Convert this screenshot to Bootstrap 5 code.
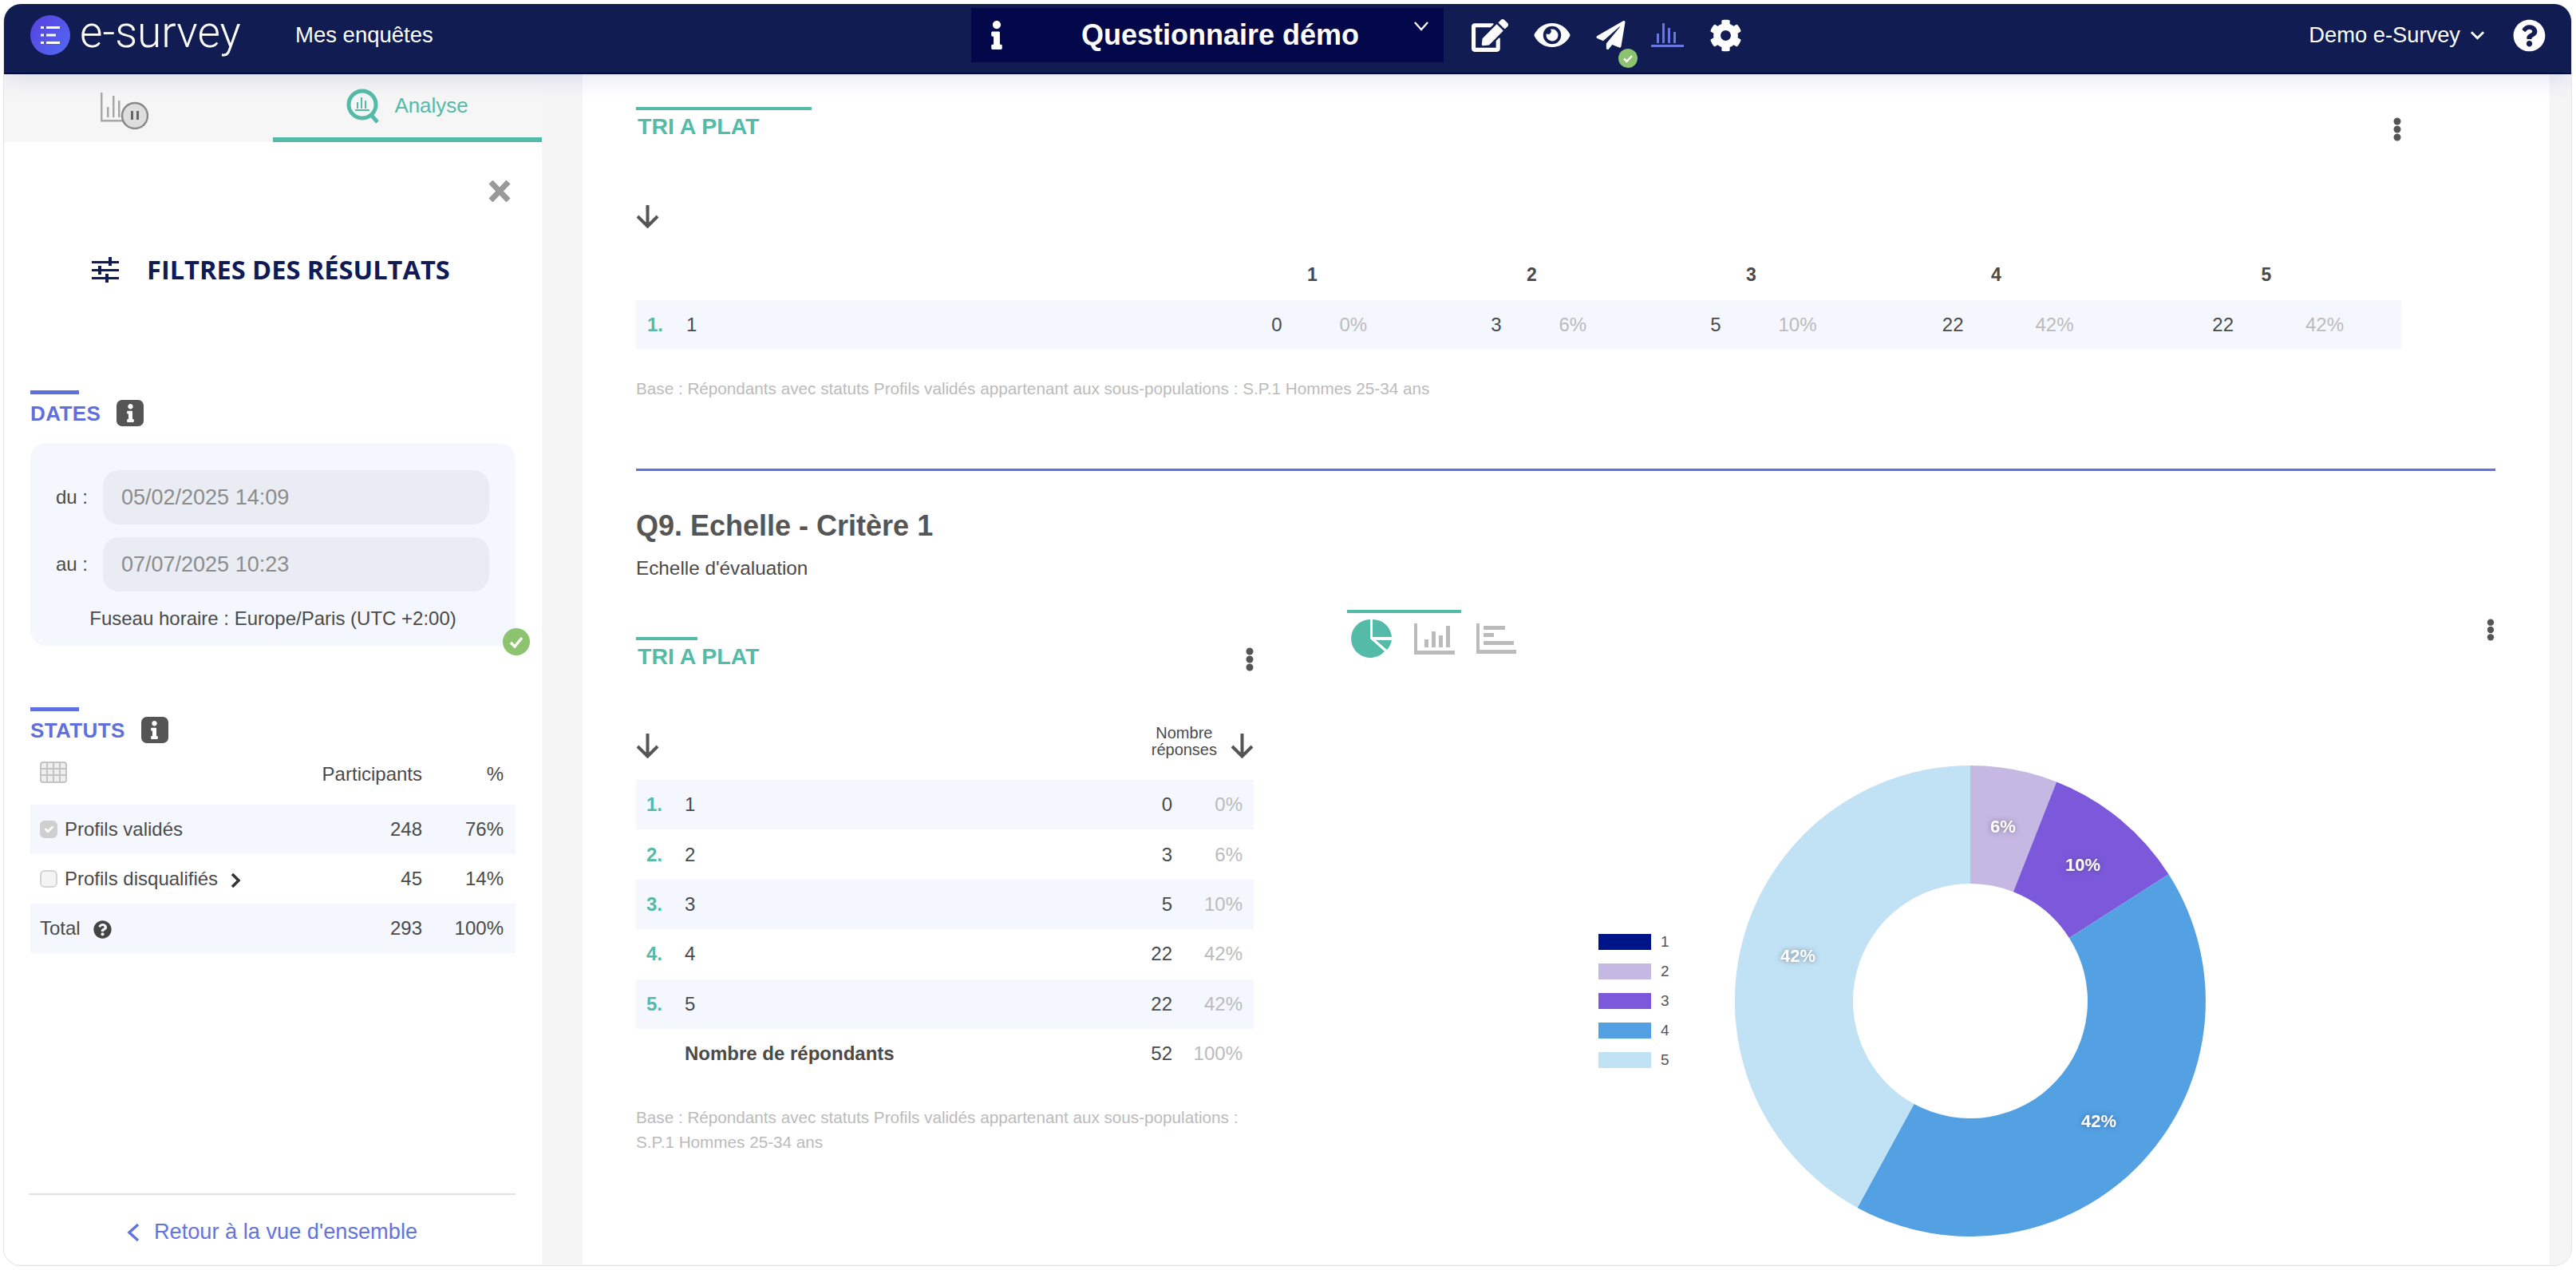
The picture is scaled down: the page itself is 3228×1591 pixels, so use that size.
<!DOCTYPE html>
<html lang="fr">
<head>
<meta charset="UTF-8">
<title>e-survey - Analyse</title>
<link href="https://cdn.jsdelivr.net/npm/bootstrap@5.3.3/dist/css/bootstrap.min.css" rel="stylesheet">
<style>
body { background: #fff; font-family: "Liberation Sans", Arial, sans-serif; font-size: 24px; color: #4a4a4a; padding: 5px 5px 5px 4px; margin: 0; height: 1591px; overflow: hidden; }
.app-shell { width: 3219px; height: 1581px; border: 1px solid #e4e4e8; border-top: 0; border-radius: 22px; overflow: hidden; background: #f5f5f6; }
/* top bar */
.top-bar { height: 88px; flex-wrap: nowrap; background: #111c52; border-bottom: 2px solid #040b3f; box-shadow: 0 8px 24px rgba(70,70,170,.13); color: #fff; padding: 0 0 8px; z-index: 5; }
.logo-dot { width: 50px; height: 50px; margin-left: 33px; }
.logo-word { font-family: Roboto, sans-serif; font-weight: 300; font-size: 55px; line-height: 1; margin-left: 12px; width: 270px; position: relative; top: -4px; white-space: nowrap; }
.top-link { font-size: 27.5px; color: #fff; text-decoration: none; width: 847px; }
.quest-box { width: 592px; height: 68px; background: #02084a; padding: 0 19px 0 25px; }
.quest-name { font-size: 36px; font-weight: 700; flex: 1; text-align: center; padding-left: 30px; white-space: nowrap; }
.quest-chev { margin-top: -22px; }
.top-icons { margin-left: 35px; gap: 32px; }
.top-user { font-size: 27.3px; margin-left: auto; }
.user-chev { margin: 0 35px 0 12px; }
.user-help { margin-right: 32px; }
.mini-check { width: 24px; height: 24px; position: absolute; left: 28px; top: 35px; }
/* sidebar */
.side-wrap { height: 1491px; }
.side-col { width: 674px; background: #fff; }
.side-tabs { height: 85px; background: #f6f6f6; }
.tab-cell { width: 50%; padding-bottom: 6px; }
.tab-off { padding: 6px 36px 0 0; }
.tab-on { border-bottom: 6px solid #54bba9; padding-bottom: 0; color: #54bba9; font-size: 25.9px; gap: 18px; }
.side-body { padding: 48px 33px 0 33px; flex: 1; min-width: 0; }
.close-line { padding-right: 6px; }
.filter-title { margin-top: 65px; margin-left: 77px; height: 40px; gap: 35px; }
.filter-title span { font-family: "Open Sans", sans-serif; font-weight: 700; font-size: 32.6px; color: #101a55; white-space: nowrap; }
.blue-rule { width: 61px; height: 5px; background: #5f6fdd; }
.blue-title { font-size: 26px; font-weight: 700; color: #5f6fdd; line-height: 30px; margin-top: 7px; gap: 20px; letter-spacing: .4px; }
.info-tag { width: 34px; height: 33px; background: #555; border-radius: 7px; }
.dates-head { margin-top: 131px; }
.date-panel { margin-top: 21px; background: #f5f7fe; border-radius: 20px; padding: 34px 33px 19px 32px; position: relative; }
.date-row { margin-bottom: 16px; }
.date-row label { flex: 0 0 59px; font-size: 24px; }
.date-row .form-control { height: 68px; background: #e9ecf3; border: 0; border-radius: 20px; color: #8c8c8c; font-size: 27px; padding-left: 23px; opacity: 1; }
.tz-line { text-align: center; line-height: 30px; margin-top: 19px; font-size: 24px; white-space: nowrap; margin-left: -32px; margin-right: -33px; }
.ok-badge { position: absolute; right: -18px; bottom: -12px; width: 34px; height: 34px; }
.status-head { margin-top: 77px; }
.stat-table.table { margin: 19px 0 0; font-size: 24px; --bs-table-color: #4a4a4a; table-layout: fixed; }
.stat-table.table > :not(caption) > * > * { padding: 0; border: 0; vertical-align: middle; height: 62px; white-space: nowrap; }
.stat-table.table > thead > tr > * { height: 40px; font-weight: 400; }
.stat-table.table > tbody > tr > .spacer-cell { height: 18px; }
.tint { --bs-table-bg: #f4f7fe; }
.stat-table.table .stat-first { padding-left: 12px; }
.grid-glyph { margin-top: -8px; }
.stat-num { width: 130px; text-align: right; }
.stat-table.table .stat-pct { width: 117px; text-align: right; padding-right: 15px; }
.stat-table .form-check-input { width: 22px; height: 22px; margin: 0 9px 0 0; background-color: #f4f4f4; border: 2px solid #d4d4d4; opacity: 1; vertical-align: -3px; }
.stat-table .form-check-input:checked { background-color: #cfcfcf; border-color: #cfcfcf; }
.side-foot { border-top: 2px solid #e2e2e2; margin: 0 33px 0 31px; height: 89px; padding-top: 6px; color: #6474dc; font-size: 27.2px; gap: 18px; }
.side-foot a { color: #6474dc; text-decoration: none; }
/* main */
.gutter-bar { width: 51px; }
.main-col { width: 2465px; background: #fff; padding: 41px 68px 0 67px; overflow: hidden; }
.track-bar { flex: 1; background: #f5f5f6; }
.teal-rule { height: 4px; background: #54bba9; }
.teal-title { font-size: 28.5px; font-weight: 700; color: #54bba9; line-height: 32px; margin: 4px 0 0 2px; }
.wide-head { width: 2212px; }
.rule-long { width: 220px; }
.rule-short { width: 77px; }
.kebab { width: 10px; height: 30px; margin-top: 13px; margin-bottom: -10px; }
.arrow-first { margin-top: 83px; }
.wide-grid { width: 2212px; display: grid; grid-template-columns: 710px 275px 275px 275px 339px 338px; }
.wide-labels { margin-top: 43px; line-height: 30px; font-size: 23px; font-weight: 700; text-align: center; }
.wide-row { margin-top: 17px; height: 62px; background: #f4f7fe; align-items: center; }
.item-no { color: #54bba9; font-weight: 700; }
.item-cell { padding-left: 14px; }
.item-cell .item-no { display: inline-block; width: 49px; }
.pair-cell { display: flex; }
.pair-val { flex: 0 0 calc(50% - 38px); text-align: right; }
.pair-pct { margin-left: 72px; color: #bbb; }
.pair-big .pair-val { flex-basis: calc(50% - 41px); }
.pair-big .pair-pct { margin-left: 90px; }
.base-note { color: #bbb; font-size: 20.7px; line-height: 30px; }
.base-wide { margin-top: 34px; }
.blue-line { height: 3px; background: #5f72dd; margin-top: 85px; }
.q-title { font-size: 36px; font-weight: 700; color: #555; line-height: 40px; margin: 49px 0 0; }
.q-sub { font-size: 24.3px; line-height: 30px; margin-top: 18px; }
.q-split { margin-top: 37px; }
.q-left { width: 774px; padding-top: 34px; }
.q-right { width: 1439px; margin-left: 117px; }
.left-head { height: 41px; margin-top: 71px; }
.nb-label { font-size: 20px; line-height: 21px; text-align: center; margin-right: 17px; }
.flat-table.table { margin: 27px 0 0; font-size: 24px; --bs-table-color: #4a4a4a; table-layout: fixed; }
.flat-table.table > :not(caption) > * > * { padding: 0; border: 0; height: 62.4px; vertical-align: middle; }
.flat-table.table .flat-no { width: 61px; padding-left: 13px; color: #54bba9; }
.flat-val { width: 80px; text-align: right; }
.flat-table.table .flat-pct { width: 102px; text-align: right; padding-right: 14px; color: #bbb; }
.left-note { line-height: 31px; margin-top: 33px; white-space: nowrap; }
.chart-rule { width: 143px; height: 4px; background: #54bba9; }
.chart-icons { margin-top: 8px; padding-left: 5px; gap: 27px; }
.chart-kebab { margin: 11px 1px 0 0; height: 28px; }
.chart-area { margin-top: 135px; padding-left: 315px; }
.legend-box { width: 171px; gap: 17px; font-size: 19px; color: #555; }
.legend-item { height: 20px; gap: 12px; }
.legend-swatch { width: 66px; height: 20px; }
.sw-one { background: #001489; }
.sw-two { background: #c5b8e2; }
.sw-three { background: #7c58db; }
.sw-four { background: #53a0e3; }
.sw-five { background: #c1e1f4; }
.donut-text { font-size: 22px; font-weight: 700; fill: #fff; text-anchor: middle; filter: drop-shadow(0 0 3px rgba(60,60,90,.55)); font-family: "Liberation Sans", Arial, sans-serif; }
</style>
</head>
<body>
<div class="app-shell d-flex flex-column">
  <nav class="navbar top-bar justify-content-start align-items-center position-relative">
    <svg class="logo-dot" viewBox="0 0 50 50">
      <defs><linearGradient id="logoGrad" x1="0" y1="0" x2="1" y2="1"><stop offset="0" stop-color="#5a3fe0"/><stop offset="1" stop-color="#4f6bf2"/></linearGradient></defs>
      <circle cx="25" cy="25" r="25" fill="url(#logoGrad)"/><g fill="#fff"><rect x="13" y="14" width="4" height="3"/><rect x="20" y="14" width="17" height="3"/><rect x="13" y="23.500" width="4" height="3"/><rect x="20" y="23.500" width="12" height="3"/><rect x="13" y="33" width="4" height="3"/><rect x="20" y="33" width="17" height="3"/></g></svg>
    <span class="logo-word">e-survey</span>
    <a class="top-link" href="#">Mes enquêtes</a>
    <div class="quest-box d-flex align-items-center">
      <svg width="14" height="36" viewBox="0 0 192 512" fill="#fff"><path d="M20 424.229h20V279.771H20c-11.046 0-20-8.954-20-20V212c0-11.046 8.954-20 20-20h112c11.046 0 20 8.954 20 20v212.229h20c11.046 0 20 8.954 20 20V492c0 11.046-8.954 20-20 20H20c-11.046 0-20-8.954-20-20v-47.771c0-11.046 8.954-20 20-20zM96 0C56.235 0 24 32.235 24 72s32.235 72 72 72 72-32.235 72-72S135.764 0 96 0z"/></svg>
      <span class="quest-name">Questionnaire démo</span>
      <svg class="quest-chev" width="18" height="12" viewBox="0 0 20 13" fill="none" stroke="#fff" stroke-width="2.500"><path d="M1 1l9 10 9-10"/></svg>
    </div>
    <div class="top-icons d-flex align-items-center">
      <svg width="46" height="41" viewBox="0 0 576 512" fill="#fff"><path d="M402.6 83.2l90.2 90.2c3.8 3.8 3.8 10 0 13.8L274.4 405.6l-92.8 10.3c-12.4 1.4-22.9-9.1-21.5-21.5l10.3-92.8L388.8 83.2c3.8-3.8 10-3.8 13.8 0zm162-22.9l-48.8-48.8c-15.2-15.2-39.9-15.2-55.2 0l-35.4 35.4c-3.8 3.8-3.8 10 0 13.8l90.2 90.2c3.8 3.8 10 3.8 13.8 0l35.4-35.4c15.2-15.3 15.2-40 0-55.2zM384 346.2V448H64V128h229.8c3.200 0 6.200-1.300 8.500-3.500l40-40c7.600-7.600 2.200-20.500-8.500-20.500H48C21.500 64 0 85.500 0 112v352c0 26.500 21.500 48 48 48h352c26.500 0 48-21.500 48-48V306.200c0-10.700-12.900-16-20.500-8.500l-40 40c-2.200 2.300-3.500 5.300-3.500 8.500z"/></svg>
      <svg width="46" height="40" viewBox="0 0 576 512" fill="#fff"><path d="M572.52 241.4C518.29 135.59 410.93 64 288 64S57.68 135.64 3.48 241.41a32.35 32.35 0 0 0 0 29.19C57.71 376.41 165.07 448 288 448s230.32-71.64 284.52-177.41a32.35 32.35 0 0 0 0-29.19zM288 400a144 144 0 1 1 144-144 143.93 143.93 0 0 1-144 144zm0-240a95.31 95.31 0 0 0-25.31 3.79 47.85 47.85 0 0 1-66.9 66.9A95.78 95.78 0 1 0 288 160z"/></svg>
      <span class="position-relative d-inline-flex">
        <svg width="37" height="36" viewBox="0 0 512 512" fill="#fff"><path d="M476 3.200L12.500 270.600c-18.100 10.400-15.800 35.600 2.200 43.200L121 358.400l287.300-253.200c5.500-4.900 13.300 2.600 8.600 8.300L176 407v80.500c0 23.600 28.500 32.900 42.500 15.800L282 426l124.600 52.200c14.200 6 30.400-2.900 33-18.200l72-432C515 7.800 493.300-6.800 476 3.200z"/></svg>
        <svg class="mini-check" viewBox="0 0 24 24"><circle cx="12" cy="12" r="12" fill="#8dc26e"/><path d="M7 12.500l3.500 3.500 6.500-7" fill="none" stroke="#fff" stroke-width="2.500"/></svg>
      </span>
      <svg width="41" height="30" viewBox="0 0 41 30" fill="#6a76e0"><rect x="0" y="27" width="41" height="3"/><rect x="7" y="13" width="3" height="12"/><rect x="14" y="0" width="3" height="25"/><rect x="21" y="6" width="3" height="19"/><rect x="28" y="11" width="3" height="14"/></svg>
      <svg width="41" height="41" viewBox="0 0 512 512" fill="#fff"><path d="M487.4 315.7l-42.6-24.6c4.300-23.200 4.300-47 0-70.200l42.600-24.600c4.900-2.800 7.100-8.600 5.500-14-11.100-35.600-30-67.800-54.700-94.600-3.800-4.100-10-5.100-14.800-2.300L380.800 110c-17.900-15.400-38.500-27.300-60.800-35.100V25.800c0-5.600-3.900-10.500-9.400-11.700-36.700-8.200-74.300-7.800-109.200 0-5.500 1.200-9.400 6.100-9.400 11.700V75c-22.200 7.900-42.800 19.800-60.800 35.100L88.700 85.500c-4.900-2.800-11-1.900-14.800 2.300-24.700 26.700-43.600 58.900-54.700 94.600-1.700 5.400.6 11.200 5.500 14L67.300 221c-4.300 23.200-4.300 47 0 70.200l-42.600 24.600c-4.900 2.800-7.100 8.600-5.500 14 11.100 35.600 30 67.800 54.700 94.600 3.800 4.100 10 5.100 14.800 2.300l42.600-24.600c17.900 15.400 38.500 27.300 60.800 35.100v49.200c0 5.600 3.900 10.500 9.400 11.700 36.700 8.200 74.300 7.800 109.200 0 5.500-1.200 9.400-6.100 9.400-11.700v-49.200c22.200-7.900 42.800-19.800 60.800-35.100l42.600 24.600c4.900 2.800 11 1.900 14.800-2.300 24.700-26.700 43.600-58.900 54.700-94.600 1.500-5.500-.7-11.300-5.600-14.100zM256 336c-44.100 0-80-35.900-80-80s35.900-80 80-80 80 35.900 80 80-35.900 80-80 80z"/></svg>
    </div>
    <div class="top-user d-flex align-items-center">
      <span>Demo e-Survey</span>
      <svg class="user-chev" width="19" height="12" viewBox="0 0 20 12" fill="none" stroke="#fff" stroke-width="3"><path d="M2 2l8 8 8-8"/></svg>
      <svg class="user-help" width="41" height="41" viewBox="0 0 512 512" fill="#fff"><path d="M504 256c0 136.997-111.043 248-248 248S8 392.997 8 256C8 119.083 119.043 8 256 8s248 111.083 248 248zM262.655 90c-54.497 0-89.255 22.957-116.549 63.758-3.536 5.286-2.353 12.415 2.715 16.258l34.699 26.31c5.205 3.947 12.621 3.008 16.665-2.122 17.864-22.658 30.113-35.797 57.303-35.797 20.429 0 45.698 13.148 45.698 32.958 0 14.976-12.363 22.667-32.534 33.976C247.128 238.528 216 254.941 216 296v4c0 6.627 5.373 12 12 12h56c6.627 0 12-5.373 12-12v-1.333c0-28.462 83.186-29.647 83.186-106.667 0-58.002-60.165-102-116.531-102zM256 338c-25.365 0-46 20.635-46 46 0 25.364 20.635 46 46 46s46-20.636 46-46c0-25.365-20.635-46-46-46z"/></svg>
    </div>
  </nav>

  <div class="side-wrap d-flex">
    <aside class="side-col d-flex flex-column">
      <div class="side-tabs d-flex">
        <div class="tab-cell tab-off d-flex justify-content-center align-items-center">
          <svg width="60" height="46" viewBox="0 0 60 46" fill="none"><g fill="#a8a8a8"><rect x="0" y="0" width="2.500" height="36"/><rect x="0" y="34" width="36" height="2.500"/><rect x="8" y="18" width="2.500" height="13"/><rect x="15" y="4" width="2.500" height="27"/><rect x="22" y="10" width="2.500" height="21"/></g><circle cx="43" cy="29" r="16" fill="#dedede" stroke="#888" stroke-width="2.500"/><rect x="38" y="23" width="3" height="11" fill="#666"/><rect x="45" y="23" width="3" height="11" fill="#666"/></svg>
        </div>
        <div class="tab-cell tab-on d-flex justify-content-center align-items-center">
          <svg width="42" height="44" viewBox="0 0 42 44" fill="none" stroke="#54bba9"><circle cx="20" cy="20" r="17" stroke-width="5"/><path d="M31 33l8 9" stroke-width="5"/><g fill="#54bba9" stroke="none"><rect x="11" y="26" width="18" height="2"/><rect x="13" y="17" width="2" height="8"/><rect x="18" y="11" width="2" height="14"/><rect x="23" y="15" width="2" height="10"/></g></svg>
          <span>Analyse</span>
        </div>
      </div>
      <div class="side-body d-flex flex-column">
        <div class="close-line d-flex justify-content-end">
          <svg width="28" height="27" viewBox="0 0 28 27" stroke="#999" stroke-width="7" fill="none"><path d="M3 2l22 23M25 2L3 25"/></svg>
        </div>
        <div class="filter-title d-flex align-items-center">
          <svg width="34" height="32" viewBox="0 0 34 32" fill="#101a55"><rect y="5" width="34" height="3"/><rect y="15" width="34" height="3"/><rect y="25" width="34" height="3"/><rect x="21" y="0" width="4" height="11"/><rect x="8" y="11" width="4" height="11"/><rect x="17" y="21" width="4" height="11"/></svg>
          <span>FILTRES DES RÉSULTATS</span>
        </div>
        <div class="dates-head">
          <div class="blue-rule"></div>
          <div class="blue-title d-flex align-items-center"><span>DATES</span>
            <span class="info-tag d-flex align-items-center justify-content-center"><svg width="9" height="23" viewBox="0 0 192 512" fill="#fff"><path d="M20 424.229h20V279.771H20c-11.046 0-20-8.954-20-20V212c0-11.046 8.954-20 20-20h112c11.046 0 20 8.954 20 20v212.229h20c11.046 0 20 8.954 20 20V492c0 11.046-8.954 20-20 20H20c-11.046 0-20-8.954-20-20v-47.771c0-11.046 8.954-20 20-20zM96 0C56.235 0 24 32.235 24 72s32.235 72 72 72 72-32.235 72-72S135.764 0 96 0z"/></svg></span>
          </div>
        </div>
        <div class="date-panel">
          <div class="date-row d-flex align-items-center"><label>du :</label><input class="form-control" disabled value="05/02/2025 14:09"></div>
          <div class="date-row d-flex align-items-center mb-0"><label>au :</label><input class="form-control" disabled value="07/07/2025 10:23"></div>
          <div class="tz-line">Fuseau horaire : Europe/Paris (UTC +2:00)</div>
          <svg class="ok-badge" viewBox="0 0 34 34"><circle cx="17" cy="17" r="17" fill="#8dc26e"/><path d="M10 18l5 5 9-11" fill="none" stroke="#fff" stroke-width="3.500"/></svg>
        </div>
        <div class="status-head">
          <div class="blue-rule"></div>
          <div class="blue-title d-flex align-items-center"><span>STATUTS</span>
            <span class="info-tag d-flex align-items-center justify-content-center"><svg width="9" height="23" viewBox="0 0 192 512" fill="#fff"><path d="M20 424.229h20V279.771H20c-11.046 0-20-8.954-20-20V212c0-11.046 8.954-20 20-20h112c11.046 0 20 8.954 20 20v212.229h20c11.046 0 20 8.954 20 20V492c0 11.046-8.954 20-20 20H20c-11.046 0-20-8.954-20-20v-47.771c0-11.046 8.954-20 20-20zM96 0C56.235 0 24 32.235 24 72s32.235 72 72 72 72-32.235 72-72S135.764 0 96 0z"/></svg></span>
          </div>
        </div>
        <div>
          <table class="table stat-table">
            <thead>
              <tr>
                <th class="stat-first"><svg class="grid-glyph" width="34" height="27" viewBox="0 0 34 27" fill="none" stroke="#c4c4c4" stroke-width="2"><rect x="1" y="1" width="32" height="25" rx="3" fill="#eee"/><path d="M9 1v25M17 1v25M25 1v25M1 9h32M1 17h32"/></svg></th>
                <th class="stat-num">Participants</th>
                <th class="stat-pct">%</th>
              </tr>
            </thead>
            <tbody>
              <tr><td class="spacer-cell" colspan="3"></td></tr>
              <tr class="tint"><td class="stat-first"><input class="form-check-input" type="checkbox" checked disabled>Profils validés</td><td class="stat-num">248</td><td class="stat-pct">76%</td></tr>
              <tr><td class="stat-first"><input class="form-check-input" type="checkbox" disabled>Profils disqualifiés<svg class="ms-3" width="13" height="20" viewBox="0 0 13 20" fill="none" stroke="#333" stroke-width="3.500"><path d="M2 2l8 8-8 8"/></svg></td><td class="stat-num">45</td><td class="stat-pct">14%</td></tr>
              <tr class="tint"><td class="stat-first">Total<svg class="ms-3" width="23" height="23" viewBox="0 0 512 512" fill="#444"><path d="M504 256c0 136.997-111.043 248-248 248S8 392.997 8 256C8 119.083 119.043 8 256 8s248 111.083 248 248zM262.655 90c-54.497 0-89.255 22.957-116.549 63.758-3.536 5.286-2.353 12.415 2.715 16.258l34.699 26.31c5.205 3.947 12.621 3.008 16.665-2.122 17.864-22.658 30.113-35.797 57.303-35.797 20.429 0 45.698 13.148 45.698 32.958 0 14.976-12.363 22.667-32.534 33.976C247.128 238.528 216 254.941 216 296v4c0 6.627 5.373 12 12 12h56c6.627 0 12-5.373 12-12v-1.333c0-28.462 83.186-29.647 83.186-106.667 0-58.002-60.165-102-116.531-102zM256 338c-25.365 0-46 20.635-46 46 0 25.364 20.635 46 46 46s46-20.636 46-46c0-25.365-20.635-46-46-46z"/></svg></td><td class="stat-num">293</td><td class="stat-pct">100%</td></tr>
            </tbody>
          </table>
        </div>
      </div>
      <div class="side-foot d-flex align-items-center justify-content-center">
        <svg width="16" height="24" viewBox="0 0 16 24" fill="none" stroke="#6474dc" stroke-width="3.500"><path d="M14 2L3 12l11 10"/></svg>
        <a href="#">Retour à la vue d'ensemble</a>
      </div>
    </aside>
    <div class="gutter-bar"></div>
    <main class="main-col">
      <div class="wide-head d-flex justify-content-between">
        <div><div class="teal-rule rule-long"></div><div class="teal-title">TRI A PLAT</div></div>
        <svg class="kebab" viewBox="0 0 10 30" fill="#555"><circle cx="5" cy="5" r="4.500"/><circle cx="5" cy="15" r="4.500"/><circle cx="5" cy="25" r="4.500"/></svg>
      </div>
      <div class="arrow-first"><svg class="d-block" width="29" height="29" viewBox="0 0 29 29" fill="none" stroke="#555" stroke-width="4"><path d="M14.500 0v26M2 14l12.500 12.500L27 14"/></svg></div>
      <div class="wide-grid wide-labels"><div></div><div>1</div><div>2</div><div>3</div><div>4</div><div>5</div></div>
      <div class="wide-grid wide-row">
        <div class="item-cell"><span class="item-no">1.</span>1</div>
        <div class="pair-cell"><span class="pair-val">0</span><span class="pair-pct">0%</span></div>
        <div class="pair-cell"><span class="pair-val">3</span><span class="pair-pct">6%</span></div>
        <div class="pair-cell"><span class="pair-val">5</span><span class="pair-pct">10%</span></div>
        <div class="pair-cell pair-big"><span class="pair-val">22</span><span class="pair-pct">42%</span></div>
        <div class="pair-cell pair-big"><span class="pair-val">22</span><span class="pair-pct">42%</span></div>
      </div>
      <div class="base-note base-wide">Base : Répondants avec statuts Profils validés appartenant aux sous-populations : S.P.1 Hommes 25-34 ans</div>
      <div class="blue-line"></div>
      <h2 class="q-title">Q9. Echelle - Critère 1</h2>
      <div class="q-sub">Echelle d'évaluation</div>
      <div class="q-split d-flex">
        <section class="q-left">
          <div class="d-flex justify-content-between">
            <div><div class="teal-rule rule-short"></div><div class="teal-title">TRI A PLAT</div></div>
            <svg class="kebab me-0" viewBox="0 0 10 30" fill="#555"><circle cx="5" cy="5" r="4.500"/><circle cx="5" cy="15" r="4.500"/><circle cx="5" cy="25" r="4.500"/></svg>
          </div>
          <div class="left-head d-flex justify-content-between align-items-end">
            <svg class="d-block" width="29" height="31" viewBox="0 0 29 31" fill="none" stroke="#555" stroke-width="4"><path d="M14.500 0v28M2 16l12.500 12.500L27 16"/></svg>
            <div class="d-flex align-items-end">
              <div class="nb-label">Nombre<br>réponses</div>
              <svg class="d-block" width="29" height="31" viewBox="0 0 29 31" fill="none" stroke="#555" stroke-width="4"><path d="M14.500 0v28M2 16l12.500 12.500L27 16"/></svg>
            </div>
          </div>
          <table class="table flat-table">
            <tbody>
              <tr class="tint"><td class="flat-no fw-bold">1.</td><td>1</td><td class="flat-val">0</td><td class="flat-pct">0%</td></tr>
              <tr><td class="flat-no fw-bold">2.</td><td>2</td><td class="flat-val">3</td><td class="flat-pct">6%</td></tr>
              <tr class="tint"><td class="flat-no fw-bold">3.</td><td>3</td><td class="flat-val">5</td><td class="flat-pct">10%</td></tr>
              <tr><td class="flat-no fw-bold">4.</td><td>4</td><td class="flat-val">22</td><td class="flat-pct">42%</td></tr>
              <tr class="tint"><td class="flat-no fw-bold">5.</td><td>5</td><td class="flat-val">22</td><td class="flat-pct">42%</td></tr>
              <tr><td class="flat-no"></td><td class="fw-bold text-nowrap">Nombre de répondants</td><td class="flat-val">52</td><td class="flat-pct">100%</td></tr>
            </tbody>
          </table>
          <div class="base-note left-note">Base : Répondants avec statuts Profils validés appartenant aux sous-populations :<br>S.P.1 Hommes 25-34 ans</div>
        </section>
        <section class="q-right">
          <div class="d-flex justify-content-between">
            <div>
              <div class="chart-rule"></div>
              <div class="chart-icons d-flex align-items-center">
                <svg width="52" height="48" viewBox="0 0 52 48" fill="#54bba9"><path d="M24 0A24 24 0 1 0 42 40L24 24Z"/><path d="M27 0A24 24 0 0 1 51 22H27Z"/><path d="M31 26H51A24 24 0 0 1 45 38Z"/></svg>
                <svg width="51" height="39" viewBox="0 0 51 39" fill="#bbb"><rect width="4" height="39"/><rect y="34" width="51" height="5"/><rect x="13" y="20" width="5" height="10"/><rect x="22" y="10" width="5" height="20"/><rect x="31" y="15" width="5" height="15"/><rect x="40" y="3" width="5" height="27"/></svg>
                <svg width="50" height="38" viewBox="0 0 50 38" fill="#bbb"><rect width="4" height="38"/><rect y="33" width="50" height="5"/><rect x="9" y="3" width="27" height="5"/><rect x="9" y="12" width="13" height="5"/><rect x="9" y="22" width="38" height="5"/></svg>
              </div>
            </div>
            <svg class="kebab chart-kebab" viewBox="0 0 10 30" fill="#555"><circle cx="5" cy="5" r="4.500"/><circle cx="5" cy="15" r="4.500"/><circle cx="5" cy="25" r="4.500"/></svg>
          </div>
          <div class="chart-area d-flex align-items-center">
            <div class="legend-box d-flex flex-column">
              <div class="legend-item d-flex align-items-center"><span class="legend-swatch sw-one"></span>1</div>
              <div class="legend-item d-flex align-items-center"><span class="legend-swatch sw-two"></span>2</div>
              <div class="legend-item d-flex align-items-center"><span class="legend-swatch sw-three"></span>3</div>
              <div class="legend-item d-flex align-items-center"><span class="legend-swatch sw-four"></span>4</div>
              <div class="legend-item d-flex align-items-center"><span class="legend-swatch sw-five"></span>5</div>
            </div>
            <svg width="590" height="590" viewBox="-295 -295 590 590">
              <path fill="#c5b8e2" d="M0 -295A295 295 0 0 1 108.100 -274.500L53.900 -136.800A147 147 0 0 0 0 -147Z"/>
              <path fill="#7c58db" d="M108.100 -274.500A295 295 0 0 1 248.600 -158.700L123.900 -79.100A147 147 0 0 0 53.900 -136.800Z"/>
              <path fill="#53a0e3" d="M248.600 -158.700A295 295 0 0 1 -141.500 258.900L-70.500 129A147 147 0 0 0 123.900 -79.100Z"/>
              <path fill="#c1e1f4" d="M-141.500 258.900A295 295 0 0 1 0 -295L0 -147A147 147 0 0 0 -70.500 129Z"/>
              <text class="donut-text" x="41" y="-211">6%</text>
              <text class="donut-text" x="141" y="-163">10%</text>
              <text class="donut-text" x="161" y="158">42%</text>
              <text class="donut-text" x="-216" y="-49">42%</text>
            </svg>
          </div>
        </section>
      </div>
    </main>
    <div class="track-bar"></div>
  </div>
</div>
</body>
</html>
